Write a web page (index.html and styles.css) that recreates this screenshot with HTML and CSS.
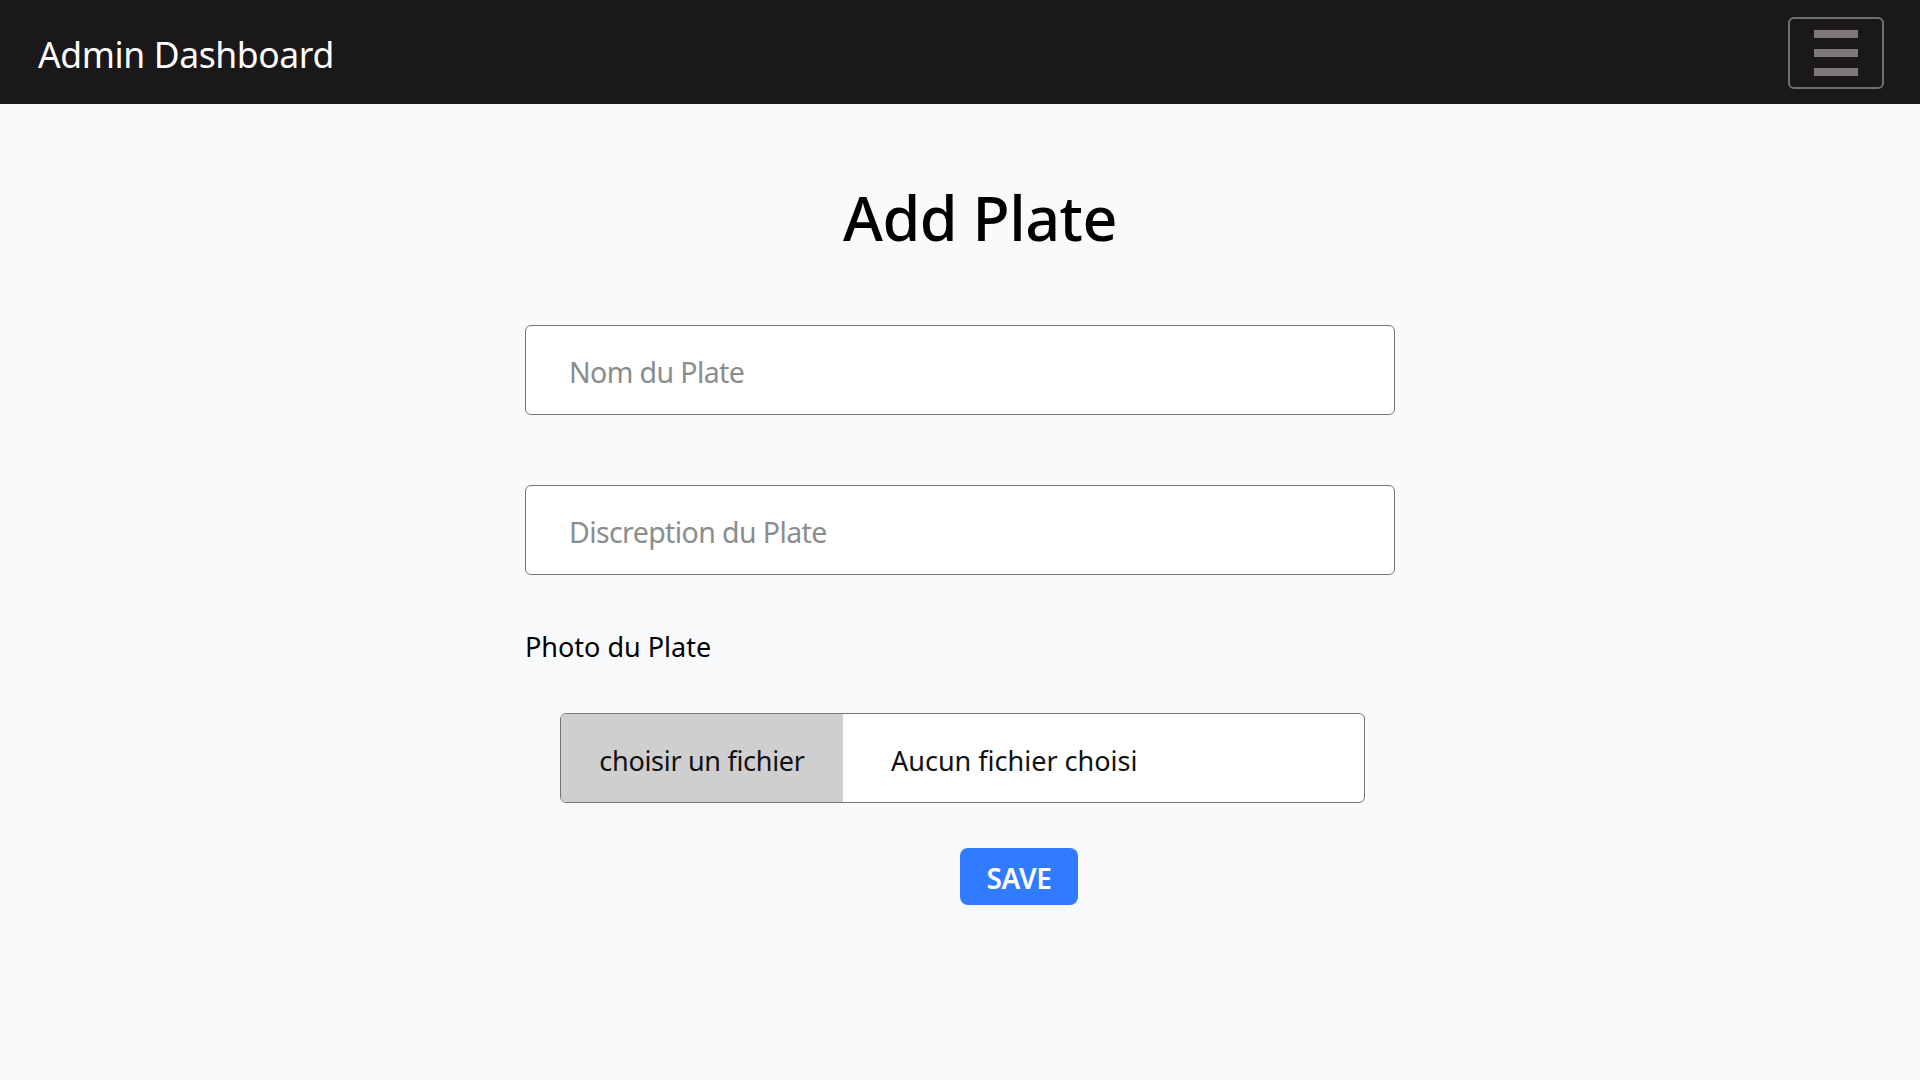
FILE: index.html
```html
<!DOCTYPE html>
<html lang="fr">
<head>
<meta charset="utf-8">
<title>Admin Dashboard</title>
<link rel="stylesheet" href="styles.css">
</head>
<body>
<nav class="navbar">
  <span class="brand">Admin Dashboard</span>
  <button class="toggler" type="button" aria-label="Menu">
    <span class="bar"></span>
    <span class="bar"></span>
    <span class="bar"></span>
  </button>
</nav>
<main class="container">
  <h1 class="title">Add Plate</h1>
  <form class="form">
    <input class="field" type="text" placeholder="Nom du Plate">
    <input class="field field-desc" type="text" placeholder="Discreption du Plate">
    <label class="label">Photo du Plate</label>
    <div class="file">
      <span class="file-btn">choisir un fichier</span>
      <span class="file-name">Aucun fichier choisi</span>
    </div>
    <button class="save" type="button">SAVE</button>
  </form>
</main>
</body>
</html>
```

FILE: styles.css
```css
* { box-sizing: border-box; }
html, body { margin: 0; padding: 0; }
body {
  background: #f9fafc;
  font-family: "Noto Sans", "Open Sans", sans-serif;
  color: #000;
  min-height: 1080px;
}
.navbar {
  height: 104px;
  background: #1a1819;
  display: flex;
  align-items: center;
  justify-content: space-between;
  padding: 0 36px 0 38px;
}
.brand {
  color: #fff;
  font-size: 35.5px;
  letter-spacing: -0.4px;
  padding-top: 4px;
}
.toggler {
  width: 96px;
  height: 72px;
  margin-top: 2px;
  background: transparent;
  border: 2px solid #6f6d6e;
  border-radius: 6px;
  display: flex;
  flex-direction: column;
  align-items: center;
  justify-content: center;
  gap: 11px;
  padding: 0;
}
.bar {
  display: block;
  width: 44px;
  height: 8px;
  background: #7f7878;
}
.container {
  width: 870px;
  margin: 0 auto;
  padding-top: 76px;
}
.title {
  margin: 0 0 68px;
  padding-left: 40px;
  text-align: center;
  font-size: 61px;
  font-weight: 500;
  line-height: 76.8px;
  letter-spacing: -0.5px;
}
.form {
  display: flex;
  flex-direction: column;
  align-items: flex-start;
}
.field {
  width: 870px;
  height: 90px;
  border: 1px solid #767676;
  border-radius: 6px;
  background: #fff;
  padding: 4px 0 0 43px;
  font-family: inherit;
  font-size: 28.5px;
  color: #000;
  outline: none;
  letter-spacing: -0.6px;
}
.field::placeholder { color: #8a8d8d; }
.field-desc { margin-top: 70px; }
.label {
  margin-top: 50px;
  font-size: 27px;
  line-height: 40px;
  letter-spacing: 0;
  padding-top: 2px;
}
.file {
  margin: 46px 0 0 35px;
  width: 805px;
  height: 90px;
  border: 1px solid #767676;
  border-radius: 6px;
  overflow: hidden;
  display: flex;
  background: #fff;
  font-size: 27px;
  color: #111;
}
.file-btn {
  width: 282px;
  background: #cfcfcf;
  display: flex;
  align-items: center;
  justify-content: center;
  letter-spacing: -0.3px;
  padding-top: 5px;
}
.file-name {
  display: flex;
  align-items: center;
  padding: 5px 0 0 48px;
  letter-spacing: 0;
}
.save {
  margin: 45px 0 0 435px;
  width: 118px;
  height: 57px;
  border: none;
  border-radius: 8px;
  background: #307bff;
  color: #fff;
  font-family: inherit;
  font-size: 28px;
  font-weight: 600;
  padding: 4px 0 0;
  letter-spacing: -0.3px;
}
```
